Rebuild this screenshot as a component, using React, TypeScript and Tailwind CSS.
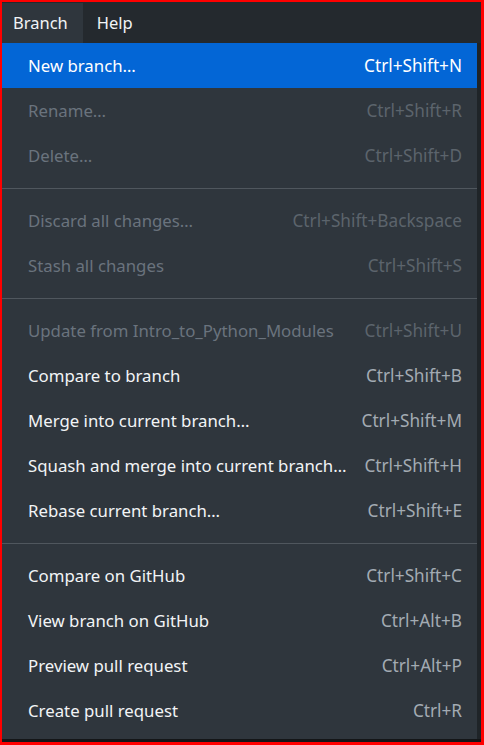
import type { ReactNode } from 'react';

type Item = { label: string; shortcut: string; disabled?: boolean; active?: boolean };

const GROUPS: Item[][] = [
  [
    { label: 'New branch…', shortcut: 'Ctrl+Shift+N', active: true },
    { label: 'Rename…', shortcut: 'Ctrl+Shift+R', disabled: true },
    { label: 'Delete…', shortcut: 'Ctrl+Shift+D', disabled: true },
  ],
  [
    { label: 'Discard all changes…', shortcut: 'Ctrl+Shift+Backspace', disabled: true },
    { label: 'Stash all changes', shortcut: 'Ctrl+Shift+S', disabled: true },
  ],
  [
    { label: 'Update from Intro_to_Python_Modules', shortcut: 'Ctrl+Shift+U', disabled: true },
    { label: 'Compare to branch', shortcut: 'Ctrl+Shift+B' },
    { label: 'Merge into current branch…', shortcut: 'Ctrl+Shift+M' },
    { label: 'Squash and merge into current branch…', shortcut: 'Ctrl+Shift+H' },
    { label: 'Rebase current branch…', shortcut: 'Ctrl+Shift+E' },
  ],
  [
    { label: 'Compare on GitHub', shortcut: 'Ctrl+Shift+C' },
    { label: 'View branch on GitHub', shortcut: 'Ctrl+Alt+B' },
    { label: 'Preview pull request', shortcut: 'Ctrl+Alt+P' },
    { label: 'Create pull request', shortcut: 'Ctrl+R' },
  ],
];

function MenuRow({ item }: { item: Item }) {
  const labelColor = item.active ? 'text-white' : item.disabled ? 'text-[#6a737d]' : 'text-[#f2f4f6]';
  const keyColor = item.active ? 'text-white' : item.disabled ? 'text-[#5c646c]' : 'text-[#a3abb3]';
  return (
    <div
      className={`flex h-[45px] items-center justify-between pl-[26px] pr-[15px] ${item.active ? 'bg-[#0366d6]' : ''}`}
    >
      <span className={`text-[16.8px] ${labelColor}`}>{item.label}</span>
      <span className={`text-[17.2px] ${keyColor}`}>{item.shortcut}</span>
    </div>
  );
}

function Separator() {
  return (
    <div className="flex h-[20px] items-center">
      <div className="h-px w-full bg-[#50575e]" />
    </div>
  );
}

function MenuBarButton({ children, open, className }: { children: ReactNode; open?: boolean; className: string }) {
  return (
    <div className={`flex h-full items-center ${className} ${open ? 'bg-[#2f363d]' : ''}`}>{children}</div>
  );
}

export default function App() {
  return (
    <div
      className="box-border h-[745px] w-[484px] border-b-[3px] border-l-2 border-r-[3px] border-t-2 border-[#ff0000] bg-[#1f2428] text-[16px] text-[#f2f4f6]"
      style={{ fontFamily: '"Noto Sans", "Open Sans", sans-serif' }}
    >
      <div className="flex h-[41px] bg-[#24292e] pt-px text-[16.5px]">
        <MenuBarButton open className="pl-[11px] pr-[15px]">
          Branch
        </MenuBarButton>
        <MenuBarButton className="pl-[14px]">Help</MenuBarButton>
      </div>
      <div className="flex h-[696px]">
        <div className="flex-1 bg-[#2f363d] pb-[6px]">
          {GROUPS.map((group, gi) => (
            <div key={gi}>
              {gi > 0 && <Separator />}
              {group.map((item) => (
                <MenuRow key={item.label} item={item} />
              ))}
            </div>
          ))}
        </div>
        <div className="w-[4px] bg-[#1f2428]" />
      </div>
      <div className="h-[3px] bg-[#141618]" />
    </div>
  );
}
